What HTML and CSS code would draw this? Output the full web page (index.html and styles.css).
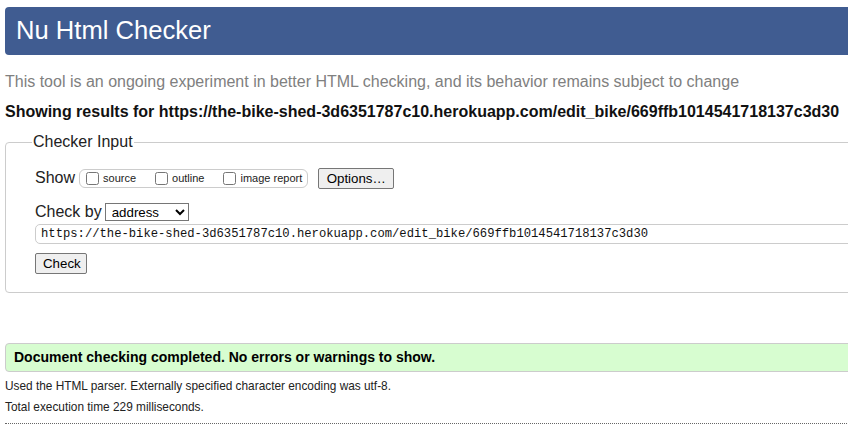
FILE: index.html
```html
<!DOCTYPE html>
<html lang="en">
<head>
<meta charset="utf-8">
<title>Showing results for https://the-bike-shed-3d6351787c10.herokuapp.com/edit_bike/669ffb1014541718137c3d30 - Nu Html Checker</title>
<link rel="stylesheet" href="styles.css">
</head>
<body>
<div class="page">
  <h1 class="title">Nu Html Checker</h1>
  <p class="intro">This tool is an ongoing experiment in better HTML checking, and its behavior remains subject to change</p>
  <p class="showing">Showing results for https://the-bike-shed-3d6351787c10.herokuapp.com/edit_bike/669ffb1014541718137c3d30</p>

  <fieldset class="checker">
    <legend class="checker-legend">Checker Input</legend>
    <div class="row row-show">
      <span class="row-label">Show</span>
      <span class="pill">
        <label class="opt"><input type="checkbox" class="cb"><span>source</span></label>
        <label class="opt"><input type="checkbox" class="cb"><span>outline</span></label>
        <label class="opt"><input type="checkbox" class="cb"><span>image report</span></label>
      </span>
      <button class="btn btn-options" type="button">Options…</button>
    </div>
    <div class="row row-by">
      <span class="row-label">Check by</span>
      <select class="select">
        <option>address</option>
      </select>
    </div>
    <div class="row row-url">
      <input class="url" type="text" value="https://the-bike-shed-3d6351787c10.herokuapp.com/edit_bike/669ffb1014541718137c3d30">
    </div>
    <div class="row row-check">
      <button class="btn btn-check" type="button">Check</button>
    </div>
  </fieldset>

  <div class="result">Document checking completed. No errors or warnings to show.</div>
  <p class="meta meta-first">Used the HTML parser. Externally specified character encoding was utf-8.</p>
  <p class="meta">Total execution time 229 milliseconds.</p>
  <hr class="dotted">
</div>
</body>
</html>
```

FILE: styles.css
```css
html {
  overflow: hidden;
  background: #fff;
}

body {
  margin: 0;
  font-family: "Liberation Sans", Arial, sans-serif;
  color: #222;
}

.page {
  width: 1100px;
  padding: 7px 5px 0 5px;
}

.title {
  margin: 0;
  height: 48px;
  line-height: 47px;
  padding-left: 11px;
  font-size: 25.6px;
  font-weight: normal;
  color: #fff;
  background: #405c91;
  border-radius: 4px 0 0 4px;
}

.intro {
  margin: 17px 0 0;
  font-size: 16px;
  line-height: 20px;
  color: #808080;
}

.showing {
  margin: 10px 0 0;
  font-size: 16px;
  line-height: 20px;
  font-weight: bold;
  color: #111;
}

.checker {
  margin: 10px 0 0;
  padding: 15px 0 18px 29px;
  border: 1px solid #ccc;
  border-radius: 4px;
}

.checker-legend {
  margin-left: -3px;
  padding: 0 1px;
  font-size: 16px;
  line-height: 20px;
  color: #222;
}

.row {
  display: flex;
  align-items: center;
}

.row-show {
  height: 22px;
}

.row-by {
  height: 22px;
  margin-top: 12px;
}

.row-url {
  margin-top: 1px;
}

.row-check {
  margin-top: 9px;
}

.row-label {
  font-size: 16px;
  line-height: 20px;
  color: #222;
}

.pill {
  display: flex;
  align-items: center;
  margin-left: 4px;
  height: 17px;
  padding: 0 5px 0 6px;
  border: 1px solid #ccc;
  border-radius: 6px;
}

.opt {
  display: flex;
  align-items: center;
  font-size: 11px;
  color: #222;
  margin-right: 19px;
}

.opt:last-child {
  margin-right: 0;
}

.cb {
  margin: 0 4px 0 0;
  width: 13px;
  height: 13px;
}

.btn {
  font-family: "Liberation Sans", Arial, sans-serif;
  font-size: 13.3px;
  color: #000;
  background: #efefef;
  border: 1px solid #767676;
  border-radius: 2px;
  height: 21px;
  padding: 0 7px;
  line-height: 19px;
}

.btn-options {
  margin-left: 10px;
  width: 76px;
}

.btn-check {
  width: 52px;
}

.select {
  margin-left: 3px;
  width: 84px;
  height: 18px;
  font-family: "Liberation Sans", Arial, sans-serif;
  font-size: 13.3px;
  color: #000;
  border: 1px solid #767676;
  border-radius: 0;
  background: #fff;
  padding: 0 0 0 2px;
}

.url {
  width: 1000px;
  height: 20px;
  box-sizing: border-box;
  padding: 0 5px;
  font-family: "Liberation Mono", "DejaVu Sans Mono", monospace;
  font-size: 12.2px;
  color: #111;
  border: 1px solid #ccc;
  border-radius: 5px 0 0 5px;
  outline: none;
}

.result {
  margin-top: 50px;
  height: 27px;
  line-height: 27px;
  padding-left: 8px;
  font-size: 14px;
  font-weight: bold;
  color: #000;
  background: #d7fdd0;
  border: 1px solid #ccc;
  border-radius: 4px 0 0 4px;
}

.meta {
  margin: 0;
  font-size: 11.85px;
  line-height: 21px;
  color: #222;
}

.meta-first {
  margin-top: 4px;
}

.dotted {
  margin: 5px 0 0;
  border: 0;
  border-top: 1px dotted #666;
  height: 0;
}
```
